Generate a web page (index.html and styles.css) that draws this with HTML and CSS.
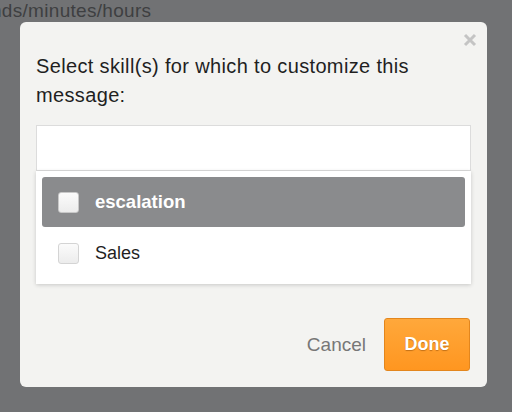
FILE: index.html
```html
<!DOCTYPE html>
<html>
<head>
<meta charset="utf-8">
<link rel="stylesheet" href="styles.css">
</head>
<body>
<div class="page">
  <div class="bg-text">nds/minutes/hours</div>
</div>
<div class="overlay">
  <div class="dialog">
    <button class="close" aria-label="Close">
      <svg width="14" height="14" viewBox="0 0 14 14"><path d="M2 2L12 12M12 2L2 12" stroke="#c4c4c4" stroke-width="3" stroke-linecap="butt"/></svg>
    </button>
    <p class="title">Select skill(s) for which to customize this message:</p>
    <div class="input"></div>
    <div class="menu">
      <div class="item active"><span class="check"></span><span class="label">escalation</span></div>
      <div class="item"><span class="check"></span><span class="label">Sales</span></div>
    </div>
    <div class="footer">
      <span class="cancel">Cancel</span>
      <button class="done">Done</button>
    </div>
  </div>
</div>
</body>
</html>
```

FILE: styles.css
```css
html, body {
  margin: 0;
  padding: 0;
}
body {
  width: 512px;
  height: 412px;
  overflow: hidden;
  background: #717274;
  font-family: "Liberation Sans", Arial, sans-serif;
  position: relative;
}
.page {
  height: 412px;
}
.bg-text {
  margin-left: -9px;
  font-size: 19px;
  line-height: 21px;
  letter-spacing: 0.3px;
  color: #3e3f41;
  white-space: nowrap;
}
.overlay {
  position: absolute;
  inset: 0;
}
.dialog {
  position: absolute;
  left: 20px;
  top: 22px;
  width: 467px;
  height: 365px;
  box-sizing: border-box;
  background: #f3f3f1;
  border-radius: 6px;
  padding: 30px 16px 16px 16px;
  display: flex;
  flex-direction: column;
}
.close {
  position: absolute;
  top: 10px;
  right: 9px;
  width: 16px;
  height: 16px;
  padding: 1px;
  border: 0;
  background: none;
}
.title {
  margin: 0;
  font-size: 20px;
  line-height: 29px;
  letter-spacing: 0.35px;
  color: #1f1f1f;
}
.input {
  margin-top: 15px;
  height: 46px;
  box-sizing: border-box;
  background: #fff;
  border: 1px solid #dcdcdc;
}
.menu {
  background: #fff;
  padding: 6px;
  box-shadow: 0 1px 4px rgba(0,0,0,0.18);
}
.item {
  height: 50px;
  display: flex;
  align-items: center;
  gap: 16px;
  padding-left: 16px;
  border-radius: 3px;
  font-size: 18px;
  color: #1f1f1f;
}
.item + .item {
  margin-top: 1px;
}
.item.active {
  background: #8a8b8d;
  color: #fff;
  font-weight: bold;
  font-size: 18.5px;
}
.check {
  width: 21px;
  height: 21px;
  box-sizing: border-box;
  border: 1px solid #d4d4d4;
  border-radius: 3px;
  background: linear-gradient(#fbfbfb, #ececec);
}
.active .check {
  border-color: #c8c8c8;
}
.footer {
  margin-top: auto;
  display: flex;
  align-items: center;
  justify-content: flex-end;
  gap: 18px;
  padding-right: 1px;
}
.cancel {
  font-size: 19px;
  color: #777;
}
.done {
  width: 86px;
  height: 53px;
  box-sizing: border-box;
  border: 1px solid #e3861d;
  border-radius: 3px;
  background: linear-gradient(#ffa83b, #ff9620);
  color: #fff;
  font-family: inherit;
  font-size: 18px;
  font-weight: bold;
  text-shadow: 0 1px 1px rgba(120,60,0,0.45);
}
```
